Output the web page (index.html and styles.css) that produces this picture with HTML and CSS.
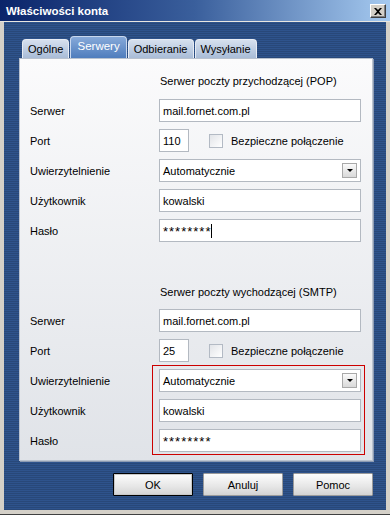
FILE: index.html
```html
<!DOCTYPE html>
<html lang="pl">
<head>
    <meta charset="UTF-8">
    <title>Właściwości konta</title>
    <link rel="stylesheet" href="styles.css">
</head>
<body>
    <div class="window">
        <div class="titlebar">
            <span class="title">Właściwości konta</span>
            <span class="close-btn">
                <svg width="8" height="7" viewBox="0 0 8 7">
                    <path d="M0 0h2l2 2 2-2h2L5 3.5 8 7H6L4 5 2 7H0l3-3.5z" fill="#000"/>
                </svg>
            </span>
        </div>

        <div class="dialog">
            <div class="tabs">
                <div class="tab">Ogólne</div>
                <div class="tab active">Serwery</div>
                <div class="tab">Odbieranie</div>
                <div class="tab">Wysyłanie</div>
            </div>

            <div class="panel">
                <div class="section-title">Serwer poczty przychodzącej (POP)</div>
                <div class="row">
                    <span class="label">Serwer</span>
                    <div class="input">mail.fornet.com.pl</div>
                </div>
                <div class="row">
                    <span class="label">Port</span>
                    <div class="input port">110</div>
                    <span class="checkbox"></span>
                    <span class="check-label">Bezpieczne połączenie</span>
                </div>
                <div class="row">
                    <span class="label">Uwierzytelnienie</span>
                    <div class="input select">
                        <span>Automatycznie</span>
                        <span class="drop-btn"></span>
                    </div>
                </div>
                <div class="row">
                    <span class="label">Użytkownik</span>
                    <div class="input">kowalski</div>
                </div>
                <div class="row">
                    <span class="label">Hasło</span>
                    <div class="input password">********<span class="caret"></span></div>
                </div>

                <div class="section-title smtp">Serwer poczty wychodzącej (SMTP)</div>
                <div class="row">
                    <span class="label">Serwer</span>
                    <div class="input">mail.fornet.com.pl</div>
                </div>
                <div class="row">
                    <span class="label">Port</span>
                    <div class="input port">25</div>
                    <span class="checkbox"></span>
                    <span class="check-label">Bezpieczne połączenie</span>
                </div>
                <div class="group">
                    <div class="row">
                        <span class="label">Uwierzytelnienie</span>
                        <div class="input select">
                            <span>Automatycznie</span>
                            <span class="drop-btn"></span>
                        </div>
                    </div>
                    <div class="row">
                        <span class="label">Użytkownik</span>
                        <div class="input">kowalski</div>
                    </div>
                    <div class="row">
                        <span class="label">Hasło</span>
                        <div class="input password">********</div>
                    </div>
                    <div class="highlight"></div>
                </div>
            </div>

            <div class="buttons">
                <button class="btn default">OK</button>
                <button class="btn">Anuluj</button>
                <button class="btn">Pomoc</button>
            </div>
        </div>
    </div>
</body>
</html>
```

FILE: styles.css
```css
* {
    margin: 0;
    padding: 0;
    box-sizing: border-box;
    font-family: 'Liberation Sans', Arial, sans-serif;
}

body {
    background-color: #d4d0c8;
    font-size: 11px;
    color: #000;
}

.window {
    width: 390px;
    height: 515px;
    background-color: #d4d0c8;
    display: flex;
    flex-direction: column;
    border-bottom: 1px solid #404040;
}

.titlebar {
    height: 22px;
    flex-shrink: 0;
    background: linear-gradient(90deg, #0a246a, #3a5f9c 50%, #a6caf0);
    display: flex;
    align-items: center;
    justify-content: space-between;
    padding: 0 4px 0 6px;
    border-bottom: 1px solid #e8e6e0;
}

.title {
    color: #fff;
    font-weight: bold;
    font-size: 11.5px;
}

.close-btn {
    width: 16px;
    height: 14px;
    background-color: #d4d0c8;
    border: 1px solid;
    border-color: #fff #404040 #404040 #fff;
    box-shadow: inset -1px -1px 0 #808080;
    display: flex;
    justify-content: center;
    align-items: center;
    margin-top: 1px;
}

.dialog {
    flex: 1;
    margin: 0 4px 4px 4px;
    padding: 14px 13px 13px 15px;
    background-color: #2b4e86;
    background-image: repeating-linear-gradient(180deg, #2e538c 0, #2e538c 1px, #284879 1px, #284879 2px);
    display: flex;
    flex-direction: column;
}

.tabs {
    display: flex;
    align-items: flex-end;
    gap: 1px;
    padding-left: 3px;
    height: 22px;
    flex-shrink: 0;
}

.tab {
    height: 19px;
    padding: 0 5px;
    display: flex;
    align-items: center;
    border: 1px solid #e7ecf4;
    border-bottom: none;
    border-radius: 4px 4px 0 0;
    background: linear-gradient(180deg, #d6e0ee, #a9bcd7);
    color: #000;
}

.tab.active {
    height: 22px;
    padding: 0 6px 3px;
    color: #fff;
    border-color: #c9d8ee;
    background: linear-gradient(180deg, #86a9d9, #4f7dbd);
    font-size: 11.5px;
}

.panel {
    height: 403px;
    flex-shrink: 0;
    display: flex;
    flex-direction: column;
    background: linear-gradient(180deg, #fbfbfc, #e0e3e8);
    border: 1px solid #b9c2cf;
    box-shadow: 1px 1px 0 #8d9bb2;
    padding: 15px 10px 0 10px;
}

.section-title {
    height: 14px;
    line-height: 14px;
    padding-left: 130px;
    margin-bottom: 4px;
}

.section-title.smtp {
    margin-top: 43px;
    margin-bottom: 3px;
}

.row {
    display: flex;
    align-items: center;
    height: 23px;
    margin-top: 7px;
}

.label {
    width: 129px;
    flex-shrink: 0;
}

.input {
    width: 202px;
    height: 23px;
    background-color: #fff;
    border: 1px solid #b3b9c1;
    display: flex;
    align-items: center;
    padding-left: 3px;
}

.input.port {
    width: 30px;
}

.input.password {
    font-size: 13px;
    letter-spacing: 1px;
    padding-top: 2px;
}

.caret {
    width: 1px;
    height: 14px;
    background-color: #000;
    margin-top: -2px;
}

.checkbox {
    width: 14px;
    height: 14px;
    margin-left: 20px;
    border: 1px solid #b3bac4;
    background: linear-gradient(135deg, #e2e4e8, #fff);
}

.check-label {
    margin-left: 8px;
}

.select {
    justify-content: space-between;
    padding-right: 3px;
}

.drop-btn {
    width: 15px;
    height: 15px;
    border: 1px solid #a9a9a9;
    background: linear-gradient(180deg, #fafafa, #d9d9d9);
    display: flex;
    justify-content: center;
    align-items: center;
}

.drop-btn::after {
    content: '';
    border-left: 3px solid transparent;
    border-right: 3px solid transparent;
    border-top: 3px solid #000;
}

.group {
    position: relative;
    display: flex;
    flex-direction: column;
}

.highlight {
    position: absolute;
    top: 3px;
    bottom: -3px;
    left: 122px;
    width: 213px;
    border: 1px solid #cc0000;
    pointer-events: none;
}

.buttons {
    display: flex;
    justify-content: flex-end;
    gap: 10px;
    margin-top: 12px;
}

.btn {
    width: 80px;
    height: 23px;
    font-size: 11px;
    border: 1px solid #9a9a9a;
    background: linear-gradient(180deg, #fdfdfd, #e6e6e6 60%, #d3d3d3);
    color: #000;
    border-radius: 1px;
}

.btn.default {
    border-color: #000;
    box-shadow: inset 0 0 0 1px #c8c8c8;
}
```
